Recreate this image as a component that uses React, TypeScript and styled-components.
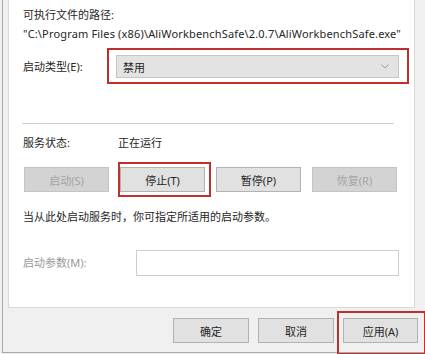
import React from 'react';
import styled, { createGlobalStyle } from 'styled-components';

const font = '"Noto Sans", "Noto Sans CJK SC", sans-serif';

const GlobalStyle = createGlobalStyle`
    html, body {
        margin: 0;
        padding: 0;
        background: #f0f0f0;
        overflow: hidden;
    }
    body {
        font-family: ${font};
        font-size: 11px;
        color: #262626;
    }
`;

const Frame = styled.div`
    width: 425px;
    height: 354px;
    padding-left: 2px;
    box-sizing: border-box;
`;

const Window = styled.div`
    height: 353px;
    border-left: 1px solid #a9a9a9;
    border-bottom: 1px solid #a9a9a9;
    box-sizing: border-box;
    padding-left: 5px;
    display: flex;
    flex-direction: column;
`;

const Panel = styled.div`
    height: 308px;
    box-sizing: border-box;
    margin-right: 10px;
    background: #ffffff;
    border: 1px solid #d9d9d9;
    border-top: none;
    padding: 7px 15px 0 14px;
    display: flex;
    flex-direction: column;
`;

const Text = styled.div<{ $gap?: number; $muted?: boolean }>`
    line-height: 16px;
    margin-top: ${(p) => p.$gap ?? 0}px;
    color: ${(p) => (p.$muted ? '#9a9a9a' : '#262626')};
    white-space: nowrap;
`;

const PathText = styled(Text)`
    letter-spacing: 0.16px;
`;

const Row = styled.div<{ $gap: number; $labelWidth: number }>`
    display: grid;
    grid-template-columns: ${(p) => p.$labelWidth}px 1fr;
    align-items: center;
    margin-top: ${(p) => p.$gap}px;
`;

const Marked = styled.div<{ $inset: string }>`
    position: relative;
    &::after {
        content: '';
        position: absolute;
        inset: ${(p) => p.$inset};
        border: 2px solid #bf2f2c;
        pointer-events: none;
    }
`;

const Combo = styled.div`
    height: 23px;
    box-sizing: border-box;
    background: #e3e3e3;
    border: 1px solid #c6c6c6;
    display: flex;
    align-items: center;
    justify-content: space-between;
    padding: 0 6px;
`;

const Chevron = styled.svg`
    width: 8px;
    height: 5px;
    margin-right: 3px;
`;

const Separator = styled.div`
    height: 1px;
    background: #cfcfcf;
    margin: 45px 5px 0 -1px;
`;

const ButtonRow = styled.div`
    display: grid;
    grid-template-columns: repeat(4, 85px);
    column-gap: 11px;
    margin-top: 16px;
    margin-left: 1px;
`;

const Button = styled.div<{ $disabled?: boolean; $width?: number }>`
    height: 25px;
    width: ${(p) => (p.$width ? `${p.$width}px` : 'auto')};
    box-sizing: border-box;
    display: flex;
    align-items: center;
    justify-content: center;
    background: ${(p) => (p.$disabled ? '#d3d3d3' : '#e1e1e1')};
    border: 1px solid ${(p) => (p.$disabled ? '#c4c4c4' : '#b2b2b2')};
    color: ${(p) => (p.$disabled ? '#a3a3a3' : '#262626')};
`;

const Field = styled.div`
    height: 26px;
    box-sizing: border-box;
    background: #ffffff;
    border: 1px solid #cdcdcd;
`;

const Footer = styled.div`
    display: flex;
    justify-content: flex-end;
    gap: 9px;
    padding: 10px 7px 0 0;
`;

export default function App() {
    return (
        <>
            <GlobalStyle />
            <Frame>
                <Window>
                    <Panel>
                        <Text>可执行文件的路径:</Text>
                        <PathText $gap={3}>"C:\Program Files (x86)\AliWorkbenchSafe\2.0.7\AliWorkbenchSafe.exe"</PathText>
                        <Row $gap={13} $labelWidth={93}>
                            <Text>启动类型(E):</Text>
                            <Marked $inset="-7px -10px -6px -9px">
                                <Combo>
                                    <span>禁用</span>
                                    <Chevron viewBox="0 0 8 5">
                                        <path d="M0.5 0.5 L4 4 L7.5 0.5" fill="none" stroke="#9a9a9a" strokeWidth="1" />
                                    </Chevron>
                                </Combo>
                            </Marked>
                        </Row>
                        <Separator />
                        <Row $gap={11} $labelWidth={95}>
                            <Text>服务状态:</Text>
                            <Text>正在运行</Text>
                        </Row>
                        <ButtonRow>
                            <Button $disabled>启动(S)</Button>
                            <Marked $inset="-5px -6px -5px -2px">
                                <Button>停止(T)</Button>
                            </Marked>
                            <Button>暂停(P)</Button>
                            <Button $disabled>恢复(R)</Button>
                        </ButtonRow>
                        <Text $gap={17}>当从此处启动服务时，你可指定所适用的启动参数。</Text>
                        <Row $gap={25} $labelWidth={113}>
                            <Text $muted>启动参数(M):</Text>
                            <Field />
                        </Row>
                    </Panel>
                    <Footer>
                        <Button $width={76}>确定</Button>
                        <Button $width={76}>取消</Button>
                        <Marked $inset="-7px -8px -12px -6px">
                            <Button $width={75}>应用(A)</Button>
                        </Marked>
                    </Footer>
                </Window>
            </Frame>
        </>
    );
}
